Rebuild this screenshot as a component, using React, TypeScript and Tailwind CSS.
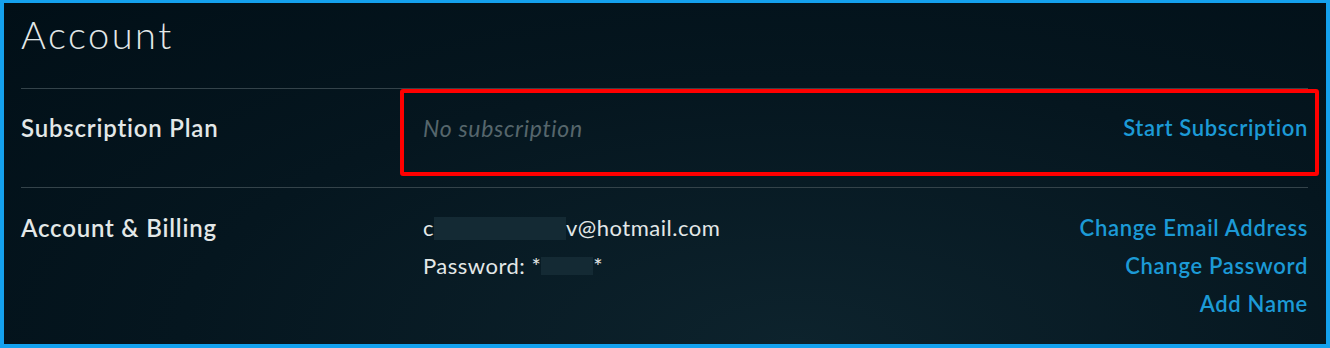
const links = ["Change Email Address", "Change Password", "Add Name"];

const App = () => {
  return (
    <div className="w-[1330px] h-[348px] border-[4px] border-t-[3px] border-[#14a1ee] bg-[radial-gradient(ellipse_at_60%_100%,#0d232d_0%,#05161f_55%,#010f17_100%)] font-['Lato',sans-serif] text-[#e3e8e8] overflow-hidden">
      <div className="pl-[17px] pr-[18px]">
        <h1 className="h-[85px] pt-[7px] text-[38px] font-light leading-[48px] tracking-[2.5px]">Account</h1>

        <div className="relative flex items-start h-[99px] pt-[26px] border-t border-[#34434a]">
          <p className="w-[402px] text-[24px] font-semibold leading-[26px] tracking-[0.8px]">Subscription Plan</p>
          <p className="flex-1 text-[23px] italic leading-[26px] tracking-[0.7px] text-[#56666c]">No subscription</p>
          <button className="text-[22px] font-semibold leading-[26px] tracking-[0.65px] text-[#1c9ad6]">Start Subscription</button>
          <div className="absolute left-[379px] -right-[11px] top-0 h-[87px] border-[4px] border-[#ff0000] rounded-[3px]" />
        </div>

        <div className="flex items-start border-t border-[#34434a] pt-[27px]">
          <p className="w-[402px] text-[24px] font-semibold leading-[26px] tracking-[0.8px]">Account &amp; Billing</p>
          <div className="flex-1 flex flex-col gap-y-[12px] text-[22px] leading-[26px] tracking-[0.5px]">
            <p className="flex items-center">
              c<span className="inline-block w-[132px] h-[23px] bg-[#142a34]" />v@hotmail.com
            </p>
            <p className="flex items-center">
              Password:&nbsp;*<span className="inline-block w-[52px] h-[18px] bg-[#142a34]" />*
            </p>
          </div>
          <div className="flex flex-col items-end gap-y-[12px] text-[22px] font-semibold leading-[26px] tracking-[0.7px] text-[#1c9ad6]">
            {links.map((link) => (
              <button key={link}>{link}</button>
            ))}
          </div>
        </div>
      </div>
    </div>
  );
};

export default App;
